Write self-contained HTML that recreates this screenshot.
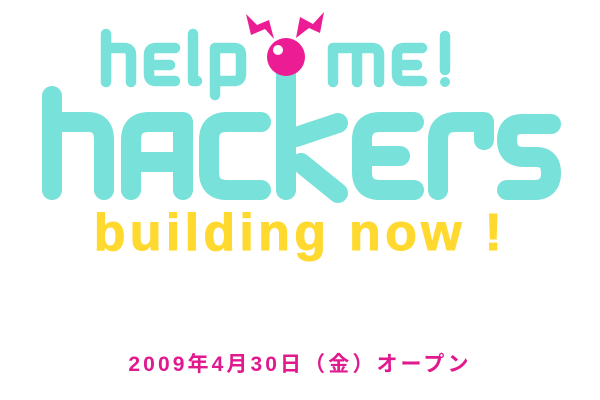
<!DOCTYPE html>
<html><head><meta charset="utf-8"><style>
html,body{margin:0;padding:0;background:#fff;width:600px;height:400px;overflow:hidden}
svg{position:absolute;left:0;top:0}
.t1{position:absolute;left:0;width:600px;top:203px;text-align:center;font:bold 52px "Liberation Sans",sans-serif;color:#FFD92F;-webkit-text-stroke:1px #FFD92F;letter-spacing:4.3px;white-space:nowrap}
.t2{position:absolute;left:0;width:600px;top:348px;text-align:center;font:bold 21px "Liberation Sans","Noto Sans CJK JP",sans-serif;color:#E0198F;letter-spacing:3.1px;white-space:nowrap}
</style></head><body>
<svg width="600" height="400" viewBox="0 0 600 400">
<g fill="none" stroke="#78E1DA" stroke-linecap="round" stroke-linejoin="round">
<g stroke-width="20">
<path d="M52 96 V190 M52 122 H88 Q104 122 104 140 V190"/>
<path d="M131 190 V140 Q131 122 149 122 H183 V190 M131 162 H183"/>
<path d="M261 122 H227 Q209 122 209 140 V172 Q209 190 227 190 H261"/>
<path d="M286 72 V190 M296 137 L338 123 M301 163 L338 193"/>
<path d="M414 122 H380 Q362 122 362 140 V172 Q362 190 380 190 H414 M362 156 H400"/>
<path d="M438 190 V140 Q438 122 456 122 H484 V140"/>
<path d="M551 124 H522 Q507 124 507 140 Q507 157 524 157 H536 Q551 157 551 173 Q551 190 534 190 H507"/>
</g>
<g stroke-width="10.5">
<path d="M106 34 V82 M106 48 H124 Q131 48 131 55 V82"/>
<path d="M175 48 H156 Q149 48 149 55 V74 Q149 81 156 81 H175 M149 65 H170"/>
<path d="M193 34 V81 H197"/>
<path d="M215 95 V48 H234 Q241 48 241 55 V74 Q241 81 234 81 H218"/>
<path d="M333 82 V48 H372 Q379 48 379 55 V82 M357 48 V82"/>
<path d="M422 48 H404 Q397 48 397 55 V74 Q397 81 404 81 H422 M397 65 H417"/>
<path d="M445 36 V70"/>
</g>
</g>
<circle cx="445" cy="82" r="5" fill="#78E1DA"/>
<circle cx="286" cy="57" r="19" fill="#EC1C94"/>
<circle cx="278" cy="50" r="5" fill="#fff"/>
<polygon points="246,14 257,25 269,20 274,39 265,29 251,35" fill="#EC1C94"/>
<polygon points="324,12 320,33 309,28 296,38 300,17 313,24" fill="#EC1C94"/>
</svg>
<div class="t1">building now !</div>
<div class="t2">2009年4月30日（金）オープン</div>
</body></html>
